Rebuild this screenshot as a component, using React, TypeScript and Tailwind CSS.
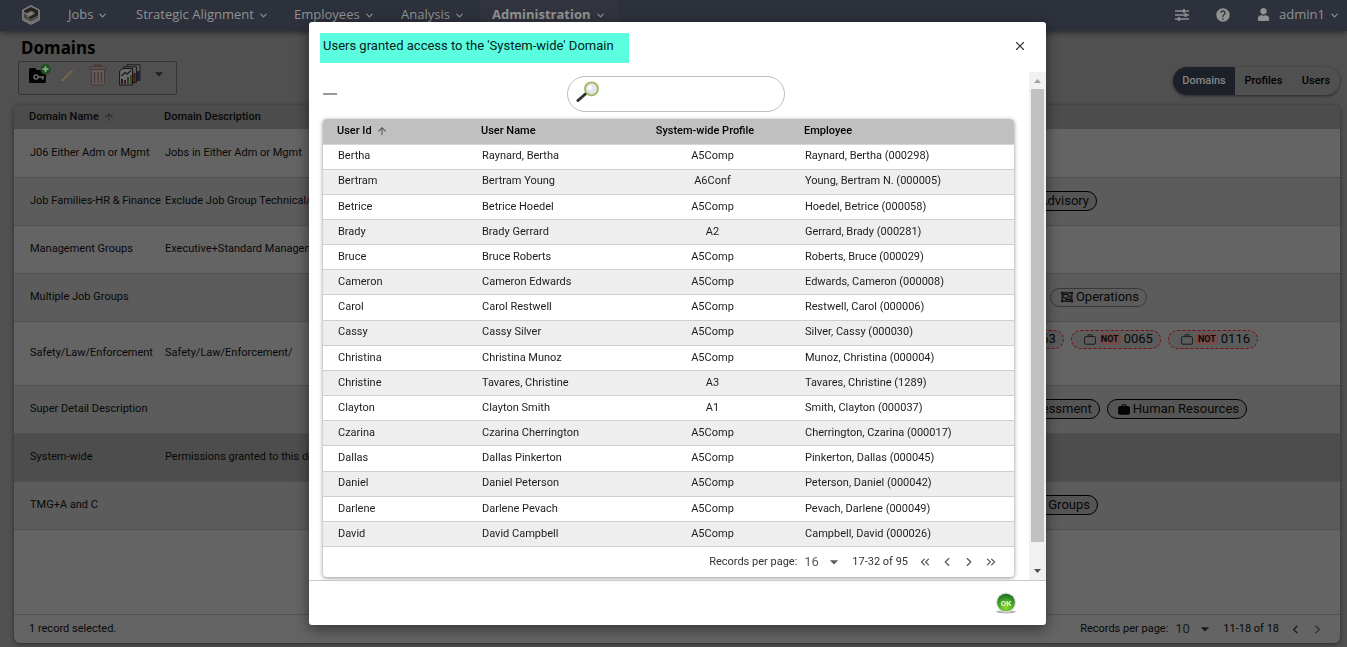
import type { ReactNode } from "react";
import {
  MdArrowUpward,
  MdArrowDropDown,
  MdChevronLeft,
  MdChevronRight,
  MdHelp,
} from "react-icons/md";
import { FaRegObjectGroup, FaUser } from "react-icons/fa";
import { ChevronDown, ChevronsLeft, ChevronsRight, ChevronLeft, ChevronRight, X } from "lucide-react";

const menu = [
  { label: "Jobs", className: "w-[68px]" },
  { label: "Strategic Alignment", className: "w-[158px]" },
  { label: "Employees", className: "w-[107px]" },
  { label: "Analysis", className: "w-[91px]" },
];

type Chip = { label: string; kind: "solid" | "group" | "not" | "plain" };

const domains: {
  name: string;
  description: string;
  row: string;
  chips?: Chip[];
  chipsClass?: string;
}[] = [
  { name: "J06 Either Adm or Mgmt", description: "Jobs in Either Adm or Mgmt", row: "h-12 bg-[#646464]" },
  {
    name: "Job Families-HR & Finance",
    description: "Exclude Job Group Technical/Advisory",
    row: "h-12 bg-[#5c5c5c]",
    chips: [{ label: "Technical/Advisory", kind: "plain" }],
    chipsClass: "items-center pr-[243px]",
  },
  { name: "Management Groups", description: "Executive+Standard Management", row: "h-12 bg-[#646464]" },
  {
    name: "Multiple Job Groups",
    description: "",
    row: "h-12 bg-[#5c5c5c]",
    chips: [{ label: "Operations", kind: "group" }],
    chipsClass: "items-center pr-[193px]",
  },
  {
    name: "Safety/Law/Enforcement",
    description: "Safety/Law/Enforcement/",
    row: "h-16 bg-[#646464]",
    chips: [
      { label: "0063", kind: "not" },
      { label: "0065", kind: "not" },
      { label: "0116", kind: "not" },
    ],
    chipsClass: "items-start pt-2 pr-[82px]",
  },
  {
    name: "Super Detail Description",
    description: "",
    row: "h-12 bg-[#5c5c5c]",
    chips: [
      { label: "Assessment", kind: "solid" },
      { label: "Human Resources", kind: "solid" },
    ],
    chipsClass: "items-center pr-[93px]",
  },
  {
    name: "System-wide",
    description: "Permissions granted to this domain",
    row: "h-12 bg-[#4d4d4d]",
  },
  {
    name: "TMG+A and C",
    description: "",
    row: "h-12 bg-[#5c5c5c]",
    chips: [{ label: "Management Groups", kind: "plain" }],
    chipsClass: "items-center pr-[242px]",
  },
];

const users = [
  ["Bertha", "Raynard, Bertha", "A5Comp", "Raynard, Bertha (000298)"],
  ["Bertram", "Bertram Young", "A6Conf", "Young, Bertram N. (000005)"],
  ["Betrice", "Betrice Hoedel", "A5Comp", "Hoedel, Betrice (000058)"],
  ["Brady", "Brady Gerrard", "A2", "Gerrard, Brady (000281)"],
  ["Bruce", "Bruce Roberts", "A5Comp", "Roberts, Bruce (000029)"],
  ["Cameron", "Cameron Edwards", "A5Comp", "Edwards, Cameron (000008)"],
  ["Carol", "Carol Restwell", "A5Comp", "Restwell, Carol (000006)"],
  ["Cassy", "Cassy Silver", "A5Comp", "Silver, Cassy (000030)"],
  ["Christina", "Christina Munoz", "A5Comp", "Munoz, Christina (000004)"],
  ["Christine", "Tavares, Christine", "A3", "Tavares, Christine (1289)"],
  ["Clayton", "Clayton Smith", "A1", "Smith, Clayton (000037)"],
  ["Czarina", "Czarina Cherrington", "A5Comp", "Cherrington, Czarina (000017)"],
  ["Dallas", "Dallas Pinkerton", "A5Comp", "Pinkerton, Dallas (000045)"],
  ["Daniel", "Daniel Peterson", "A5Comp", "Peterson, Daniel (000042)"],
  ["Darlene", "Darlene Pevach", "A5Comp", "Pevach, Darlene (000049)"],
  ["David", "David Campbell", "A5Comp", "Campbell, David (000026)"],
];

function Logo() {
  return (
    <svg width="18" height="20" viewBox="0 0 18 20" fill="none">
      <path d="M9 .6 17.3 5v10L9 19.400 .7 15V5Z" fill="#6f6f6f" stroke="#858585" />
      <path d="M2 5.600 9 2l7 3.600v5L9 14l-3-1.500 6.500-3.500V7.500L9 5.800 5 8 2 7Z" fill="#24221e" />
      <path d="M2 8.500 5 10v2l4 2.200 7-3.400v1.700L9 16.200l-7-3.400Z" fill="#4a4740" />
      <path d="M6 9.500 9 7.800l1.500.8L8 10.200Z" fill="#8a8a8a" />
    </svg>
  );
}

function SlidersIcon() {
  return (
    <svg width="14" height="12" viewBox="0 0 14 12" fill="none" stroke="#8e8e8e" strokeWidth="1.6">
      <path d="M0 2h14M0 6h14M0 10h14" />
      <path d="M9 0v4M10.500 4v4M4 8v4" strokeWidth="1.8" />
    </svg>
  );
}

function NewDomainIcon() {
  return (
    <svg width="22" height="20" viewBox="0 0 22 20">
      <path d="M0 5.5A1.5 1.5 0 0 1 1.500 4H6l2 2h8a1 1 0 0 1 1 1v10.500a1.500 1.500 0 0 1-1.500 1.500h-14A1.500 1.500 0 0 1 0 17.500Z" fill="#050505" />
      <circle cx="7" cy="13" r="2" fill="none" stroke="#6e6e6e" strokeWidth="1.500" />
      <path d="M9 13h6M13.500 13v2.500" stroke="#6e6e6e" strokeWidth="1.600" />
      <circle cx="16.500" cy="5.200" r="5.200" fill="#1d4f1f" />
      <path d="M16.500 2.200v6M13.500 5.200h6" stroke="#8ca98c" strokeWidth="1.800" />
    </svg>
  );
}

function PencilIcon() {
  return (
    <svg width="18" height="18" viewBox="0 0 18 18" fill="none">
      <path d="M2.500 15.500 13.500 4.500" stroke="#6e6348" strokeWidth="2" />
      <path d="M2.800 14.200 12.500 4.500" stroke="#7d7250" strokeWidth="0.800" />
      <path d="M13.300 4.700 15.800 2.200" stroke="#644c4c" strokeWidth="2.600" />
      <path d="M1 17l.6-2.500 1.900 1.900Z" fill="#45413b" />
    </svg>
  );
}

function TrashIcon() {
  return (
    <svg width="18" height="22" viewBox="0 0 18 22" fill="none" stroke="#443a38">
      <path d="M6 2.500V.8h6v1.700" strokeWidth="1.200" />
      <rect x="0.600" y="2.600" width="16.800" height="2.800" rx="1" fill="#5f5350" />
      <path d="M2.500 5.500h13v14a1.500 1.500 0 0 1-1.500 1.500H4a1.500 1.500 0 0 1-1.500-1.500Z" fill="#665b58" />
      <path d="M5.500 8v11M9 8v11M12.500 8v11" strokeWidth="1.400" />
    </svg>
  );
}

function ReportsIcon() {
  return (
    <svg width="22" height="22" viewBox="0 0 22 22" fill="none">
      <path d="M8 .8h13v15.500h-13Z" fill="#5c5c5c" stroke="#1c1c1c" />
      <path d="M4.500 2.800h13V18.500h-13Z" fill="#5c5c5c" stroke="#1c1c1c" />
      <path d="M.6 7 4 4.500h9.500v16.500H.6Z" fill="#6b6b6b" stroke="#161616" />
      <path d="M2.500 12 6 8.500l2 1.500 4-3.500" stroke="#202020" strokeWidth="1.400" />
      <path d="M3 20v-5" stroke="#161d3d" strokeWidth="2" />
      <path d="M6 20v-4" stroke="#451a1a" strokeWidth="2" />
      <path d="M9 20v-7" stroke="#243f20" strokeWidth="2" />
      <path d="M12 20v-9" stroke="#3c3922" strokeWidth="1.600" />
      <path d="M15.500 18v-9" stroke="#451a1a" strokeWidth="2.400" />
      <path d="M19.300 16V7" stroke="#161d3d" strokeWidth="2.400" />
    </svg>
  );
}

function BriefcaseIcon({ filled = false }: { filled?: boolean }) {
  return (
    <svg width="12" height="11" viewBox="0 0 12 11" fill={filled ? "#050505" : "none"} stroke={filled ? "#050505" : "#1c1c1c"}>
      <rect x="0.600" y="2.600" width="10.800" height="7.600" rx="1" />
      <path d="M4 2.500V.8h4v1.700" fill="none" />
    </svg>
  );
}

function SearchIcon() {
  return (
    <svg width="24" height="22" viewBox="0 0 24 22" fill="none" className="shrink-0">
      <path d="M2 19.500 10.500 12" stroke="#2f2f2f" strokeWidth="3" strokeLinecap="round" />
      <circle cx="15.500" cy="7.800" r="6.500" fill="#e4e3f0" stroke="#9cb55a" strokeWidth="1.800" />
      <circle cx="15.500" cy="7.800" r="5.300" stroke="#d3dfae" strokeWidth="0.800" />
      <circle cx="14" cy="6.500" r="2.600" fill="#f8f8fd" />
    </svg>
  );
}

function OkIcon() {
  return (
    <svg width="22" height="22" viewBox="0 0 22 22">
      <defs>
        <radialGradient id="ok-fill" cx="50%" cy="80%" r="75%">
          <stop offset="0" stopColor="#8fdc2c" />
          <stop offset="0.500" stopColor="#4fae27" />
          <stop offset="1" stopColor="#1d7425" />
        </radialGradient>
      </defs>
      <ellipse cx="11" cy="19.800" rx="10" ry="1.600" fill="#b5b5b5" />
      <circle cx="11" cy="10.500" r="10" fill="#dcdcdc" />
      <circle cx="11" cy="10.500" r="8.800" fill="url(#ok-fill)" />
      <text x="11" y="13.500" textAnchor="middle" fontFamily="Roboto, sans-serif" fontSize="8" fontWeight="700" fill="#e9f7dc">
        OK
      </text>
    </svg>
  );
}

function DomainChip({ label, kind }: Chip) {
  if (kind === "not") {
    return (
      <span className="flex h-[19px] items-center rounded-full border border-dashed border-[#7d0d0d] bg-[#5c5c5c] pr-[7px] pl-3 text-[13px]">
        <BriefcaseIcon />
        <span className="mx-[3px] rounded-sm bg-[#754c4a] px-0.5 text-[9px] leading-3 font-bold">NOT</span>
        {label}
      </span>
    );
  }
  if (kind === "group") {
    return (
      <span className="flex h-[19px] items-center gap-[3px] rounded-full border border-[#383838] pr-[7px] pl-2.5 text-[13px]">
        <FaRegObjectGroup size={12} />
        {label}
      </span>
    );
  }
  return (
    <span className="flex h-5 items-center gap-[3px] rounded-full border border-black bg-[#555] pr-[7px] pl-2.5 text-[13px]">
      {kind === "solid" && <BriefcaseIcon filled />}
      {label}
    </span>
  );
}

function PageSize({ id, value, children }: { id: string; value: string; children?: ReactNode }) {
  return (
    <>
      <label htmlFor={id}>Records per page:</label>
      <span className="ml-[7px] flex items-center opacity-80">
        <select id={id} defaultValue={value} className="w-10 appearance-none bg-transparent text-[13px] outline-none">
          <option>{value}</option>
        </select>
        <MdArrowDropDown size={20} className="pointer-events-none -ml-5" />
      </span>
      {children}
    </>
  );
}

function NavBar() {
  return (
    <header className="flex h-[31px] shrink-0 items-center bg-[#2d313c] pb-0.5 font-['Open_Sans',sans-serif] text-[13px] text-[#929292] shadow-[0_2px_5px_rgba(0,0,0,0.45)]">
      <a href="#home" aria-label="Home" className="mr-7 ml-[22px]">
        <Logo />
      </a>
      <nav className="flex h-full items-center">
        {menu.map((item) => (
          <button key={item.label} className={`flex items-center gap-1 text-left whitespace-nowrap ${item.className}`}>
            {item.label}
            <ChevronDown size={11} strokeWidth={2.5} className="mt-0.5" />
          </button>
        ))}
        <button className="-ml-3 flex h-full w-[138px] items-center gap-1 bg-[#31343e] pl-3 font-bold">
          Administration
          <ChevronDown size={11} strokeWidth={2.5} className="mt-0.5" />
        </button>
      </nav>
      <div className="ml-auto flex items-center pr-[7px]">
        <button aria-label="Settings" className="mr-[26px]">
          <SlidersIcon />
        </button>
        <button aria-label="Help" className="mr-[26px]">
          <MdHelp size={16} />
        </button>
        <button className="flex items-center">
          <FaUser size={13} className="mr-[9px]" />
          admin1
          <ChevronDown size={11} strokeWidth={2.5} className="mt-0.5 ml-1" />
        </button>
      </div>
    </header>
  );
}

function DomainsPage() {
  return (
    <main className="flex min-h-0 flex-1 flex-col pt-[5px] pr-[7px] pb-1 pl-3.5">
      <div className="flex shrink-0 items-end justify-between pb-2.5">
        <div className="pl-1">
          <h1 className="pb-0.5 pl-[3px] font-['Noto_Sans',sans-serif] text-[17px] leading-[23px] font-bold text-black">Domains</h1>
          <div className="flex h-[34px] w-[159px] items-start rounded-xs border border-[#353535] pt-0.5 pl-2.5">
            <button aria-label="New domain" className="mr-2"><NewDomainIcon /></button>
            <button aria-label="Edit domain" className="mt-0.5 mr-3"><PencilIcon /></button>
            <button aria-label="Delete domain" className="mr-3"><TrashIcon /></button>
            <button aria-label="Reports"><ReportsIcon /></button>
            <button aria-label="More reports" className="ml-2 text-[#1b1f29]"><MdArrowDropDown size={20} /></button>
          </div>
        </div>
        <div className="flex h-7 overflow-hidden rounded-full text-[11px] font-medium text-black shadow-[0_1px_3px_rgba(0,0,0,0.5)]">
          <button className="w-[62px] bg-[#1c2029] text-[#868686]">Domains</button>
          <button className="w-[57px]">Profiles</button>
          <button className="w-12">Users</button>
        </div>
      </div>

      <section className="flex min-h-0 flex-1 flex-col overflow-hidden rounded-md bg-[#646464] text-[#080808] shadow-[0_1px_4px_rgba(0,0,0,0.5)]">
        <table className="w-full table-fixed text-left text-[11px] whitespace-nowrap">
          <thead>
            <tr className="h-6 bg-[#4c4c4c]">
              <th className="w-[135px] pl-[15px] font-medium">
                <span className="flex items-center gap-1">
                  Domain Name <MdArrowUpward size={12} className="text-[#2a2a2a]" />
                </span>
              </th>
              <th className="w-[165px] pl-[15px] font-medium">Domain Description</th>
              <th aria-label="Rules" />
            </tr>
          </thead>
          <tbody>
            {domains.map((domain) => (
              <tr key={domain.name} className={`border-b border-[#515151] ${domain.row}`}>
                <td className="pl-4">{domain.name}</td>
                <td className="overflow-hidden pl-4">{domain.description}</td>
                <td className="h-[inherit] p-0">
                  {domain.chips && (
                    <div className={`flex h-full justify-end gap-[7px] ${domain.chipsClass}`}>
                      {domain.chips.map((chip) => (
                        <DomainChip key={chip.label} {...chip} />
                      ))}
                    </div>
                  )}
                </td>
              </tr>
            ))}
          </tbody>
        </table>
        <footer className="mt-auto flex h-[29px] shrink-0 items-center border-t border-[#535353] pr-3.5 pl-[15px] text-[11px]">
          <span className="mr-auto">1 record selected.</span>
          <PageSize id="domain-page-size" value="10">
            <span className="ml-2">11-18 of 18</span>
            <button aria-label="Previous page" className="ml-2 text-[#1f1f1f]"><MdChevronLeft size={17} /></button>
            <button aria-label="Next page" className="ml-[5px] text-[#333]"><MdChevronRight size={17} /></button>
          </PageSize>
        </footer>
      </section>
    </main>
  );
}

function UsersTable() {
  return (
    <div className="mt-[7px] mr-[15px] overflow-hidden rounded-[4px] shadow-[0_1px_4px_rgba(0,0,0,0.45)]">
      <table className="h-[428px] w-full table-fixed text-left text-[11px] text-[#1c1c1c]">
        <thead>
          <tr className="h-[25px] border-b border-[#d6d6d6] bg-[#c0c0c0] text-black">
            <th className="w-[144px] pl-3.5 font-medium">
              <span className="flex items-center gap-1">
                User Id <MdArrowUpward size={12} className="text-[#555]" />
              </span>
            </th>
            <th className="w-[169px] pl-3.5 font-medium">User Name</th>
            <th className="w-[153px] pr-[15px] text-center font-medium">System-wide Profile</th>
            <th className="pl-[15px] font-medium">Employee</th>
          </tr>
        </thead>
        <tbody>
          {users.map(([id, name, profile, employee]) => (
            <tr key={id} className="border-b border-[#cfcfcf] even:bg-[#eee]">
              <td className="pl-[15px]">{id}</td>
              <td className="pl-[15px]">{name}</td>
              <td className="text-center">{profile}</td>
              <td className="pl-4">{employee}</td>
            </tr>
          ))}
        </tbody>
      </table>
      <div className="flex h-[30px] items-center justify-end pr-4 text-[11px] text-[#333]">
        <PageSize id="user-page-size" value="16">
          <span className="ml-2">17-32 of 95</span>
        </PageSize>
        <div className="ml-2.5 flex gap-2 text-[#555]">
          <button aria-label="First page"><ChevronsLeft size={14} /></button>
          <button aria-label="Previous page"><ChevronLeft size={14} /></button>
          <button aria-label="Next page"><ChevronRight size={14} /></button>
          <button aria-label="Last page"><ChevronsRight size={14} /></button>
        </div>
      </div>
    </div>
  );
}

function UsersDialog() {
  return (
    <div className="fixed inset-0 flex items-center justify-center pl-2">
      <div
        role="dialog"
        aria-labelledby="dialog-title"
        className="flex w-[737px] flex-col rounded-[3px] bg-white shadow-[0_4px_14px_rgba(0,0,0,0.5)]"
      >
        <div className="flex h-[50px] items-start justify-between pt-[11px] pr-[19px] pl-[11px]">
          <h2 id="dialog-title" className="h-[30px] w-[309px] bg-[#5bffe0] pl-[3px] text-[13px] leading-[26px] font-normal whitespace-nowrap text-[#04211c]">
            Users granted access to the 'System-wide' Domain
          </h2>
          <button aria-label="Close" className="mt-[6px] text-[#333]"><X size={14} /></button>
        </div>
        <div className="flex h-[508px]">
          <div className="flex-1 pt-1 pl-3.5">
            <div className="grid grid-cols-[1fr_auto_1fr] items-center">
              <button aria-label="Collapse" className="h-0.5 w-3.5 bg-[#999]" />
              <label className="flex h-9 w-[218px] items-center rounded-full border border-[#bdbdbd] pr-4 pb-1 pl-2">
                <SearchIcon />
                <input type="text" aria-label="Search users" className="w-full min-w-0 pl-2 text-[13px] outline-none" />
              </label>
            </div>
            <UsersTable />
          </div>
          <div className="flex w-[17px] flex-col items-center bg-[#f1f1f1]">
            <svg width="17" height="17" viewBox="0 0 17 17"><path d="M5 11h7L8.500 7Z" fill="#a3a3a3" /></svg>
            <div className="w-[13px] flex-1 bg-[#c1c1c1]" />
            <svg width="17" height="38" viewBox="0 0 17 38"><path d="M5 27h7L8.500 31Z" fill="#505050" /></svg>
          </div>
        </div>
        <div className="flex h-[45px] items-center justify-end border-t border-[#c9c9c9] pr-[29px]">
          <button aria-label="OK"><OkIcon /></button>
        </div>
      </div>
    </div>
  );
}

export default function App() {
  return (
    <div className="flex h-screen flex-col bg-[#505050] font-[Roboto,sans-serif]">
      <NavBar />
      <DomainsPage />
      <UsersDialog />
    </div>
  );
}
